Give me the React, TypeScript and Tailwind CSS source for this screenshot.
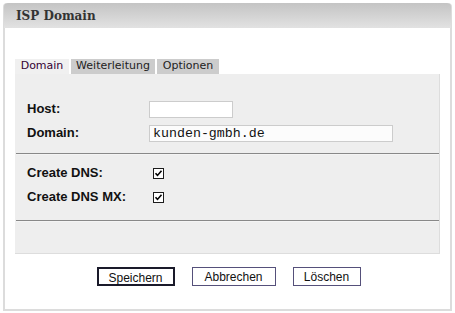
import React from 'react';

const label = "text-[13px] leading-[18px] font-bold text-[#111] [font-family:'Liberation_Sans',Arial,sans-serif]";

const Check = () => (
  <span className="flex h-[11px] w-[11px] items-center justify-center border border-[#1c1c1c] bg-white">
    <svg width="9" height="9" viewBox="0 0 9 9">
      <path d="M1.5 4.2 L3.5 6.4 L7.5 1.8" fill="none" stroke="#000" strokeWidth="1.6" />
    </svg>
  </span>
);

export default function App() {
  return (
    <div className="h-[313px] w-[455px] bg-white pt-[3px] px-[3px]">
      <div className="flex h-[308px] flex-col border-x-2 border-b-2 border-[#dcdcdc] rounded-t-[4px]">
        <div className="-mx-[1px] flex h-[25px] items-center rounded-t-[4px] bg-gradient-to-b from-[#c4c4c4] to-[#e2e2e2] pl-[12px]">
          <span className="text-[12px] font-bold text-[#333] [font-family:'DejaVu_Serif',Georgia,serif]">ISP Domain</span>
        </div>
        <div className="flex flex-1 flex-col px-[10px] pt-[31px]">
          <div className="flex items-end gap-[2px] text-[11px] [font-family:'DejaVu_Sans',Verdana,sans-serif]">
            <div className="flex h-[15px] w-[54px] items-center justify-center bg-[#f0f0f0] text-[#330033]">Domain</div>
            <div className="flex h-[15px] w-[84px] items-center justify-center bg-[#cccccc] text-[#222]">Weiterleitung</div>
            <div className="flex h-[15px] w-[62px] items-center justify-center bg-[#cccccc] text-[#222]">Optionen</div>
          </div>
          <div className="flex h-[180px] flex-col border-r border-b border-[#dddddd] bg-[#eeeeee] px-[1px] pt-[26px]">
            <div className="grid grid-cols-[122px_1fr] items-center gap-y-[6px] pl-[11px]">
              <span className={label}>Host:</span>
              <div className="h-[17px] w-[84px] border border-[#cccccc] bg-white" />
              <span className={label}>Domain:</span>
              <div className="flex h-[17px] w-[244px] items-center border border-[#cccccc] bg-[#fcfcfc] pl-[3px] text-[13.3px] leading-[15px] text-[#111] [font-family:'Liberation_Mono','Courier_New',monospace]">
                kunden-gmbh.de
              </div>
            </div>
            <div className="mt-[11px] h-[2px] w-[423px] border-t border-[#888] border-b border-b-[#f4f4f4]" />
            <div className="grid grid-cols-[126px_1fr] items-center gap-y-[6px] pl-[11px] pt-[9px]">
              <span className={label}>Create DNS:</span>
              <Check />
              <span className={label}>Create DNS MX:</span>
              <Check />
            </div>
            <div className="mt-[14px] h-[2px] w-[423px] border-t border-[#888] border-b border-b-[#f4f4f4]" />
          </div>
          <div className="flex justify-center gap-[17px] pt-[13px] pl-[2px] text-[12px] text-[#111] [font-family:'Liberation_Sans',Arial,sans-serif]">
            <button className="h-[19px] w-[78px] border-2 border-[#1a1a2a] bg-white">Speichern</button>
            <button className="h-[19px] w-[84px] border border-[#55507a] bg-white">Abbrechen</button>
            <button className="h-[19px] w-[68px] border border-[#55507a] bg-white">Löschen</button>
          </div>
        </div>
      </div>
    </div>
  );
}
